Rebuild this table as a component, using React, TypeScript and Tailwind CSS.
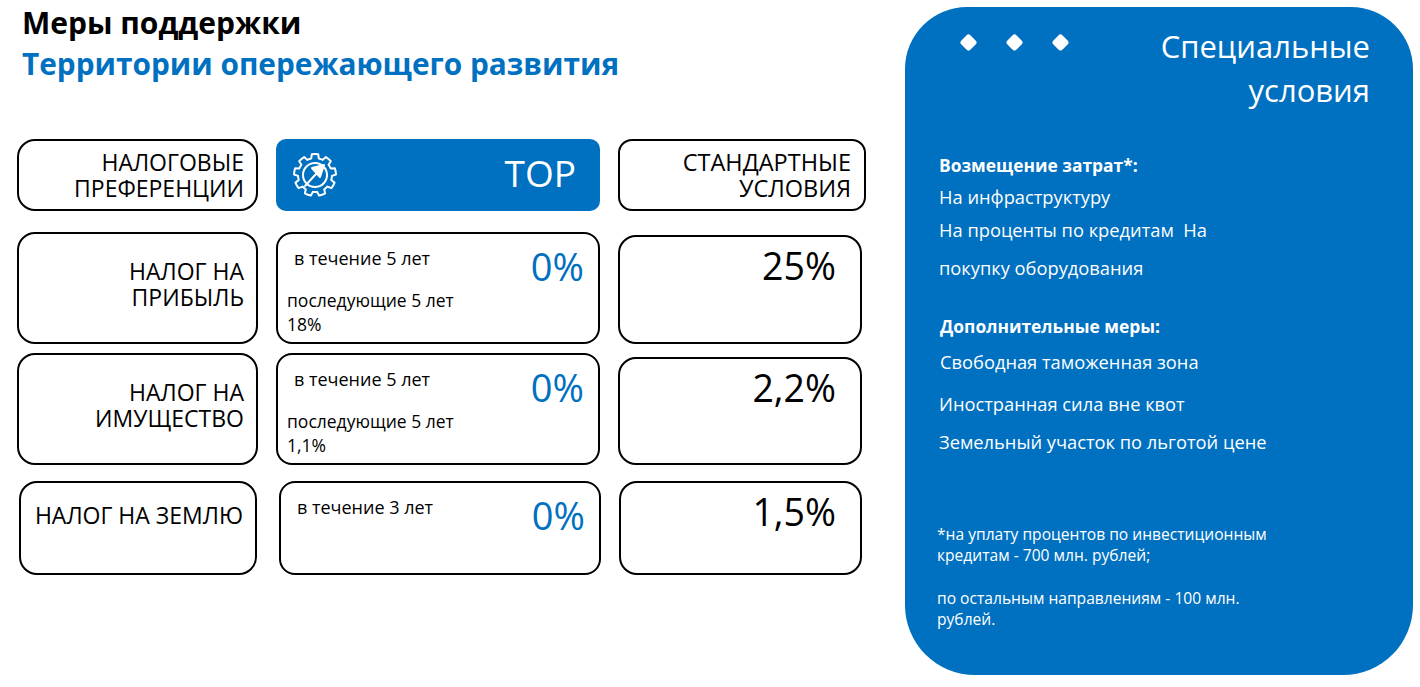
import React from "react";

const font = { fontFamily: '"Open Sans", "Noto Sans", sans-serif' };

function gearPath(cx: number, cy: number, rOut: number, rIn: number, teeth: number) {
  const pts: string[] = [];
  const step = (Math.PI * 2) / teeth;
  for (let i = 0; i < teeth; i++) {
    const a = i * step - Math.PI / 2;
    const a1 = a - step * 0.22;
    const a2 = a + step * 0.22;
    const b1 = a + step * 0.32;
    const b2 = a + step * 0.68;
    const p = (ang: number, r: number) => `${(cx + r * Math.cos(ang)).toFixed(2)} ${(cy + r * Math.sin(ang)).toFixed(2)}`;
    pts.push(`${i === 0 ? "M" : "L"} ${p(a1, rOut)}`);
    pts.push(`A ${rOut} ${rOut} 0 0 1 ${p(a2, rOut)}`);
    pts.push(`L ${p(b1, rIn)}`);
    pts.push(`A ${rIn} ${rIn} 0 0 1 ${p(b2, rIn)}`);
  }
  return pts.join(" ") + " Z";
}

function GearIcon() {
  return (
    <svg width="46" height="46" viewBox="0 0 46 46" fill="none" stroke="white" strokeWidth="2" strokeLinejoin="round">
      <path d={gearPath(23, 23, 21, 17, 9)} />
      <circle cx="23" cy="23" r="12" />
      <line x1="13" y1="34" x2="24" y2="22" strokeLinecap="round" />
      <path d="M20 16 L32 13 L28 25 Z" fill="white" />
    </svg>
  );
}

function Box({ className = "", children }: { className?: string; children?: React.ReactNode }) {
  return <div className={`border-2 border-black bg-white ${className}`}>{children}</div>;
}

function LabelCell({ lines, className = "" }: { lines: string[]; className?: string }) {
  return (
    <Box className={`rounded-[18px] flex flex-col items-end pr-3 text-[23px] leading-[26px] text-black ${className}`}>
      {lines.map((l) => (
        <span key={l}>{l}</span>
      ))}
    </Box>
  );
}

function TorCell({ first, rest, className = "" }: { first: string; rest?: string[]; className?: string }) {
  return (
    <Box className={`rounded-[16px] relative text-black ${className}`}>
      <div className="pl-[16px] pt-[12px] text-[18px] leading-[24px]">{first}</div>
      {rest && (
        <div className="pl-[9px] pt-[18px] text-[17.5px] leading-[24px]">
          {rest.map((r) => (
            <div key={r}>{r}</div>
          ))}
        </div>
      )}
      <div className="absolute right-[14px] top-[10px] text-[38px] leading-[44px] text-[#0070c0]">0%</div>
    </Box>
  );
}

function StdCell({ value, className = "" }: { value: string; className?: string }) {
  return (
    <Box className={`rounded-[18px] flex justify-end pr-[24px] pt-[7px] text-[37.5px] leading-[44px] text-black ${className}`}>
      {value}
    </Box>
  );
}

export default function App() {
  return (
    <div className="w-[1420px] h-[687px] bg-white flex overflow-hidden" style={font}>
      {/* Left side */}
      <div className="w-[905px] flex flex-col">
        <div className="pl-[22px] pt-[2px]">
          <h1 className="text-[30px] leading-[41px] font-bold text-black">Меры поддержки</h1>
          <h2 className="text-[29.8px] leading-[41px] font-bold text-[#0070c0]">Территории опережающего развития</h2>
        </div>

        <div className="pl-[17px] mt-[55px] flex flex-col">
          {/* Header row */}
          <div className="flex gap-[18px] h-[72px]">
            <LabelCell lines={["НАЛОГОВЫЕ", "ПРЕФЕРЕНЦИИ"]} className="w-[241px] justify-center rounded-[14px]" />
            <div className="w-[324px] rounded-[10px] bg-[#0070c0] flex items-center justify-between pl-[16px] pr-[24px]">
              <GearIcon />
              <span className="text-white text-[37px] leading-none pb-[6px]">ТОР</span>
            </div>
            <Box className="w-[248px] rounded-[14px] flex flex-col justify-center items-end pr-[13px] text-[23.5px] leading-[26px] text-black">
              <span>СТАНДАРТНЫЕ</span>
              <span>УСЛОВИЯ</span>
            </Box>
          </div>

          {/* Profit tax */}
          <div className="flex gap-[18px] h-[112px] mt-[21px]">
            <LabelCell lines={["НАЛОГ НА", "ПРИБЫЛЬ"]} className="w-[241px] pt-[24px]" />
            <TorCell first="в течение 5 лет" rest={["последующие 5 лет", "18%"]} className="w-[324px]" />
            <StdCell value="25%" className="w-[244px] mt-[3px]" />
          </div>

          {/* Property tax */}
          <div className="flex gap-[18px] h-[112px] mt-[9px]">
            <LabelCell lines={["НАЛОГ НА", "ИМУЩЕСТВО"]} className="w-[241px] pt-[24px]" />
            <TorCell first="в течение 5 лет" rest={["последующие 5 лет", "1,1%"]} className="w-[324px]" />
            <StdCell value="2,2%" className="w-[244px] mt-[4px]" />
          </div>

          {/* Land tax */}
          <div className="flex h-[94px] mt-[16px]">
            <LabelCell lines={["НАЛОГ НА ЗЕМЛЮ"]} className="w-[238px] ml-[2px] pt-[19px]" />
            <TorCell first="в течение 3 лет" className="w-[322px] ml-[22px]" />
            <StdCell value="1,5%" className="w-[243px] ml-[18px]" />
          </div>
        </div>
      </div>

      {/* Right panel */}
      <div className="w-[508px] h-[668px] mt-[7px] bg-[#0070c0] rounded-t-[62px] rounded-b-[70px] text-white pl-[34px] pr-[43px] pt-[17px]">
        <div className="flex items-start justify-between">
          <div className="flex gap-[33px] pl-[23px] pt-[12px]">
            <span className="block w-[13px] h-[13px] bg-white rotate-45 rounded-[3px]" />
            <span className="block w-[13px] h-[13px] bg-white rotate-45 rounded-[3px]" />
            <span className="block w-[13px] h-[13px] bg-white rotate-45 rounded-[3px]" />
          </div>
          <div className="text-right text-[31px] leading-[44px]">
            <div>Специальные</div>
            <div>условия</div>
          </div>
        </div>

        <div className="mt-[41px] text-[18.3px]">
          <div className="font-bold text-[17.4px] leading-[24px]">Возмещение затрат*:</div>
          <div className="mt-[8px] leading-[24px]">На инфраструктуру</div>
          <div className="mt-[9px] leading-[24px]">На проценты по кредитам&nbsp; На</div>
          <div className="mt-[14px] leading-[24px]">покупку оборудования</div>

          <div className="mt-[34px] font-bold text-[17.4px] leading-[24px] pl-[1px]">Дополнительные меры:</div>
          <div className="mt-[12px] leading-[24px] pl-[1px]">Свободная таможенная зона</div>
          <div className="mt-[18px] leading-[24px]">Иностранная сила вне квот</div>
          <div className="mt-[14px] leading-[24px]">Земельный участок по льготой цене</div>
        </div>

        <div className="mt-[70px] text-[15.6px] leading-[21px] -ml-[2px]">
          <div>*на уплату процентов по инвестиционным</div>
          <div>кредитам - 700 млн. рублей;</div>
          <div className="mt-[22px]">по остальным направлениям - 100 млн.</div>
          <div>рублей.</div>
        </div>
      </div>
    </div>
  );
}
